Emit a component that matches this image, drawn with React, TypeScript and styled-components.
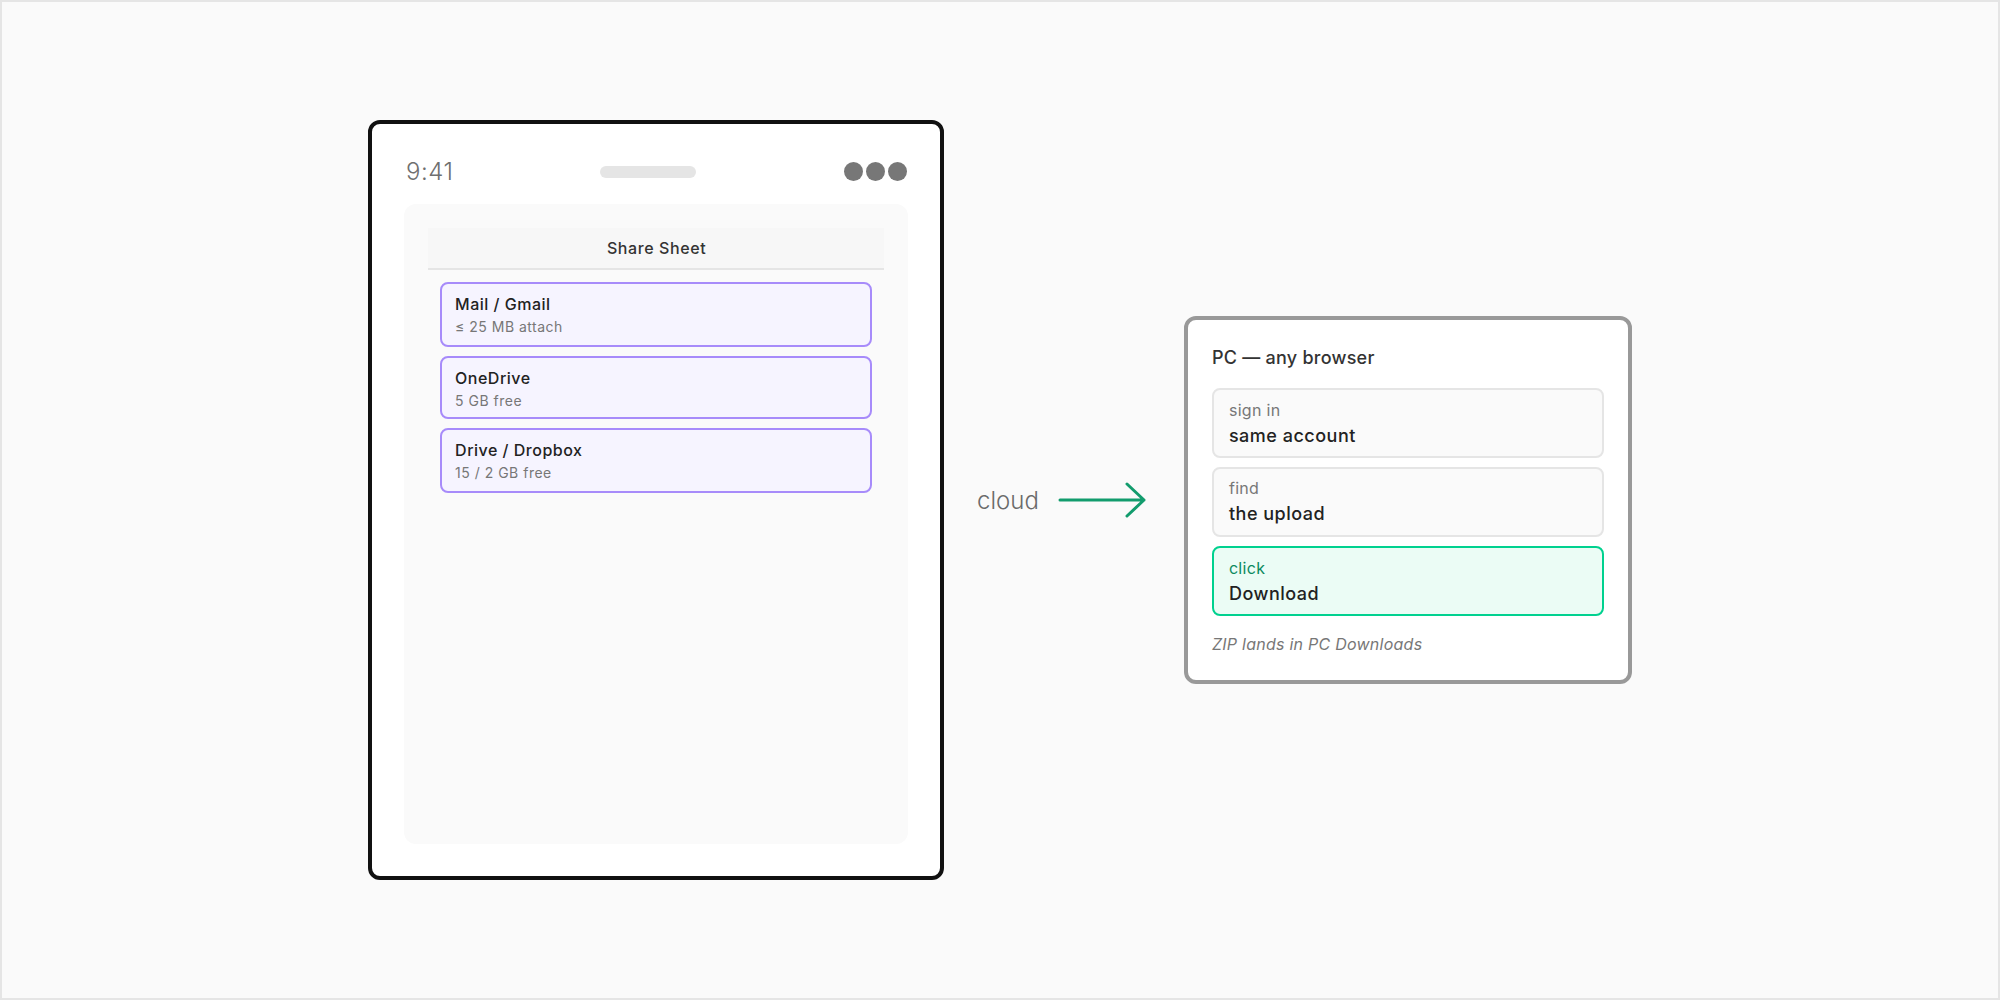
import styled, { createGlobalStyle } from 'styled-components';

const GlobalStyle = createGlobalStyle`
  html, body {
    margin: 0;
    padding: 0;
  }

  body {
    font-family: Inter, "Liberation Sans", sans-serif;
  }
`;

const shareTargets = [
  { name: 'Mail / Gmail', note: '≤ 25 MB attach', compact: false },
  { name: 'OneDrive', note: '5 GB free', compact: true },
  { name: 'Drive / Dropbox', note: '15 / 2 GB free', compact: false },
];

const pcSteps = [
  { label: 'sign in', value: 'same account', active: false, raised: false },
  { label: 'find', value: 'the upload', active: false, raised: true },
  { label: 'click', value: 'Download', active: true, raised: false },
];

function App() {
  return (
    <>
      <GlobalStyle />
      <Page>
        <Phone>
          <StatusBar>
            <Clock>9:41</Clock>
            <Notch />
            <Dots>
              <Dot />
              <Dot />
              <Dot />
            </Dots>
          </StatusBar>
          <Screen>
            <SheetHeader>Share Sheet</SheetHeader>
            <TargetList>
              {shareTargets.map((target) => (
                <Target key={target.name} $compact={target.compact}>
                  <TargetName>{target.name}</TargetName>
                  <TargetNote>{target.note}</TargetNote>
                </Target>
              ))}
            </TargetList>
          </Screen>
        </Phone>
        <Connector>
          <ConnectorLabel>cloud</ConnectorLabel>
          <svg width="90" height="40" viewBox="0 0 90 40" fill="none">
            <path
              d="M3 20H87M70 4L87 20L70 36"
              stroke="#129c6d"
              strokeWidth="3"
              strokeLinecap="round"
              strokeLinejoin="round"
            />
          </svg>
        </Connector>
        <PcCard>
          <PcTitle>PC — any browser</PcTitle>
          <StepList>
            {pcSteps.map((step) => (
              <Step key={step.label} $active={step.active} $raised={step.raised}>
                <StepLabel $active={step.active}>{step.label}</StepLabel>
                <StepValue>{step.value}</StepValue>
              </Step>
            ))}
          </StepList>
          <PcNote>ZIP lands in PC Downloads</PcNote>
        </PcCard>
      </Page>
    </>
  );
}

const Page = styled.div`
  display: flex;
  justify-content: center;
  align-items: center;
  box-sizing: border-box;
  width: 2000px;
  height: 1000px;

  border: 2px solid #e5e5e5;
  background: #fafafa;
`;

const Phone = styled.div`
  display: flex;
  flex-direction: column;
  box-sizing: border-box;
  width: 576px;
  height: 760px;

  padding: 32px;

  border: 4px solid #111111;
  border-radius: 12px;
  background: #ffffff;
`;

const StatusBar = styled.div`
  display: flex;
  justify-content: space-between;
  align-items: center;
  height: 30px;

  margin-bottom: 18px;
  padding-right: 1px;
`;

const Clock = styled.span`
  padding-left: 2px;

  font-size: 24px;
  font-weight: 300;
  letter-spacing: 0.5px;

  color: #6f6f6f;
`;

const Notch = styled.div`
  width: 96px;
  height: 12px;

  margin: 2px 2px 0 0;

  border-radius: 6px;
  background: #e5e5e5;
`;

const Dots = styled.div`
  display: flex;
  gap: 3px;
`;

const Dot = styled.span`
  width: 19px;
  height: 19px;

  border-radius: 50%;
  background: #777777;
`;

const Screen = styled.div`
  flex: 1;

  padding: 24px;

  border-radius: 12px;
  background: #fafafa;
`;

const SheetHeader = styled.div`
  display: flex;
  justify-content: center;
  align-items: center;
  box-sizing: border-box;
  height: 42px;

  padding-left: 1px;

  border-bottom: 2px solid #e5e5e5;
  background: #f7f7f7;

  font-size: 16px;
  font-weight: 500;
  letter-spacing: 0.6px;

  color: #333333;
`;

const TargetList = styled.div`
  display: flex;
  flex-direction: column;
  gap: 9px;

  padding: 12px 12px 0;
`;

const Target = styled.div<{ $compact: boolean }>`
  display: flex;
  flex-direction: column;
  box-sizing: border-box;
  height: ${({ $compact }) => ($compact ? '63px' : '65px')};

  padding: 8px 13px 0;

  border: 2px solid #a78bfa;
  border-radius: 8px;
  background: #f6f4ff;
`;

const TargetName = styled.span`
  margin-bottom: 1px;

  font-size: 16px;
  font-weight: 500;
  line-height: 24px;
  letter-spacing: 0.5px;

  color: #222222;
`;

const TargetNote = styled.span`
  font-size: 14px;
  line-height: 20px;
  letter-spacing: 0.5px;

  color: #777777;
`;

const Connector = styled.div`
  display: flex;
  align-items: center;
  gap: 18px;

  margin: 0 37px 0 33px;
`;

const ConnectorLabel = styled.span`
  font-size: 24px;
  font-weight: 300;

  color: #6a6a6a;
`;

const PcCard = styled.div`
  box-sizing: border-box;
  width: 448px;
  height: 368px;

  padding: 24px;

  border: 4px solid #999999;
  border-radius: 12px;
  background: #ffffff;
`;

const PcTitle = styled.div`
  height: 36px;

  margin-bottom: 8px;

  font-size: 18px;
  font-weight: 500;
  line-height: 28px;
  letter-spacing: 0.25px;

  color: #333333;
`;

const StepList = styled.div`
  display: flex;
  flex-direction: column;
  gap: 9px;
`;

const Step = styled.div<{ $active: boolean; $raised: boolean }>`
  display: flex;
  flex-direction: column;
  box-sizing: border-box;
  height: 70px;

  padding: ${({ $raised }) => ($raised ? '7px' : '8px')} 15px 0;

  border: 2px solid ${({ $active }) => ($active ? '#00d18f' : '#e5e5e5')};
  border-radius: 8px;
  background: ${({ $active }) => ($active ? '#ebfcf5' : '#fafafa')};
`;

const StepLabel = styled.span<{ $active: boolean }>`
  margin-bottom: 1px;

  font-size: 16px;
  line-height: 24px;
  letter-spacing: 0.3px;

  color: ${({ $active }) => ($active ? '#0b8a5e' : '#777777')};
`;

const StepValue = styled.span`
  font-size: 18px;
  font-weight: 500;
  line-height: 26px;
  letter-spacing: 0.5px;

  color: #222222;
`;

const PcNote = styled.div`
  margin-top: 16px;

  font-size: 16px;
  font-style: italic;
  line-height: 24px;
  letter-spacing: 0.25px;

  color: #777777;
`;

export default App;
